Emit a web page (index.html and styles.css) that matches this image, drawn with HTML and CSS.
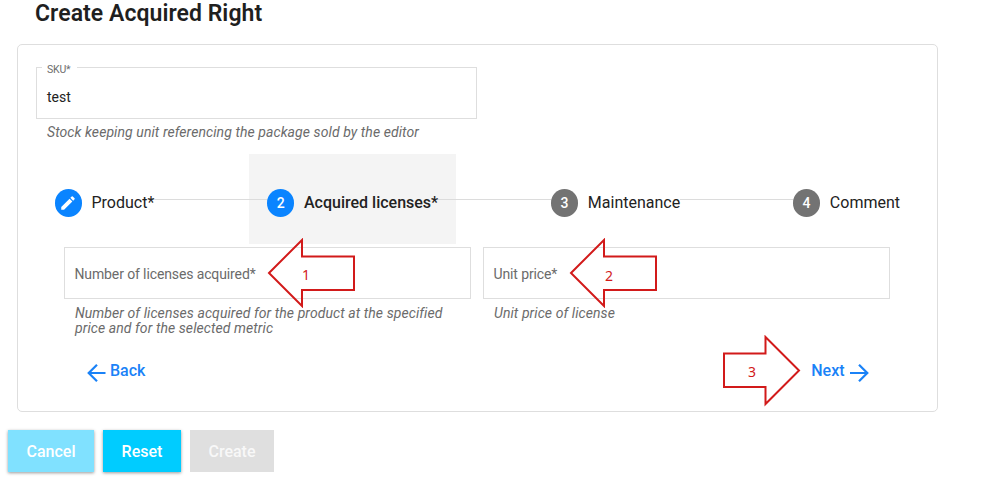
FILE: index.html
```html
<!DOCTYPE html>
<html lang="en">
<head>
<meta charset="utf-8">
<title>Create Acquired Right</title>
<link rel="stylesheet" href="styles.css">
</head>
<body>
<main class="page">
  <h1 class="title">Create Acquired Right</h1>
  <section class="card">
    <div class="field field-sku">
      <span class="float-label">SKU*</span>
      <span class="value">test</span>
    </div>
    <p class="hint hint-sku">Stock keeping unit referencing the package sold by the editor</p>

    <nav class="stepper">
      <div class="step">
        <span class="dot blue"><svg width="18" height="18" viewBox="0 0 24 24"><path fill="#fff" d="M3 17.25V21h3.75L17.81 9.94l-3.75-3.75L3 17.25zM20.71 7.04a1 1 0 0 0 0-1.41l-2.34-2.34a1 1 0 0 0-1.41 0l-1.83 1.83 3.75 3.75 1.83-1.83z"/></svg></span>
        <span class="step-label">Product*</span>
      </div>
      <i class="line"></i>
      <div class="step active">
        <span class="dot blue">2</span>
        <span class="step-label">Acquired licenses*</span>
      </div>
      <i class="line"></i>
      <div class="step">
        <span class="dot">3</span>
        <span class="step-label">Maintenance</span>
      </div>
      <i class="line"></i>
      <div class="step">
        <span class="dot">4</span>
        <span class="step-label">Comment</span>
      </div>
    </nav>

    <div class="columns">
      <div>
        <div class="field"><span class="placeholder">Number of licenses acquired*</span></div>
        <p class="hint">Number of licenses acquired for the product at the specified<br>price and for the selected metric</p>
      </div>
      <div>
        <div class="field"><span class="placeholder">Unit price*</span></div>
        <p class="hint">Unit price of license</p>
      </div>
    </div>

    <div class="moves">
      <a class="move"><svg width="20" height="20" viewBox="0 0 20 20"><path d="M19.5 10H3M11 1.7L2.7 10L11 18.3"/></svg><span>Back</span></a>
      <a class="move"><span>Next</span><svg width="20" height="20" viewBox="0 0 20 20"><path d="M1 10H18M10 1.7L18.3 10L10 18.3"/></svg></a>
    </div>
  </section>
  <div class="actions">
    <button class="btn cancel">Cancel</button>
    <button class="btn reset">Reset</button>
    <button class="btn create" disabled>Create</button>
  </div>

  <div class="callout one"><svg width="90" height="70" viewBox="0 0 90 70"><path d="M2 35L35 2V18.5H87V52H35V68Z"/></svg><span>1</span></div>
  <div class="callout two"><svg width="90" height="70" viewBox="0 0 90 70"><path d="M2 35L35 2V18.5H87V52H35V68Z"/></svg><span>2</span></div>
  <div class="callout three"><svg width="80" height="72" viewBox="0 0 80 72"><path d="M2 18.5H43.5V2L77 35.5L43.5 69V52H2Z"/></svg><span>3</span></div>
</main>
</body>
</html>
```
FILE: styles.css
```css
* { box-sizing: border-box; }
body { margin: 0; background: #fff; font-family: Roboto, "Liberation Sans", sans-serif; color: #222; }
.page { position: relative; width: 985px; height: 483px; overflow: hidden; }
.title { margin: 0 0 0 35px; height: 44px; font-size: 23px; letter-spacing: .05px; line-height: 27px; font-weight: 600; color: #1f1f1f; white-space: nowrap; }
.card { width: 921px; height: 368px; margin-left: 17px; padding: 22px 19px 0 18px; border: 1px solid #dedede; border-radius: 5px; }
.field { position: relative; height: 52px; border: 1px solid #dedede; display: flex; align-items: center; padding: 0 10px; font-size: 14px; white-space: nowrap; }
.field-sku { width: 441px; }
.float-label { position: absolute; left: 5px; top: -6px; padding: 0 7px 0 5px; background: #fff; font-size: 10.5px; letter-spacing: -.2px; line-height: 15px; color: #6d6d6d; }
.value { padding-top: 7px; }
.placeholder { padding-top: 1px; color: #6b6b6b; letter-spacing: -.12px; }
.columns .field { padding-left: 9.5px; }
.hint { margin: 7px 0 0 11px; font-size: 14px; line-height: 15px; letter-spacing: .08px; font-style: italic; color: #6b6b6b; white-space: nowrap; }
.hint-sku { margin-top: 6px; }
.stepper { display: flex; align-items: center; height: 90px; margin: 14px 18px 0 18.5px; }
.step { display: flex; align-items: center; gap: 9.5px; height: 90px; padding-top: 7.5px; }
.active { background: #f4f4f4; margin: 0 -18px; padding-left: 18px; padding-right: 18px; font-weight: 500; }
.dot { width: 27.5px; height: 27.5px; border-radius: 50%; background: #737373; color: #fff; display: flex; align-items: center; justify-content: center; font-size: 14px; font-weight: 500; }
.blue { background: #0a84ff; }
.step-label { font-size: 16px; white-space: nowrap; }
.line { position: relative; flex: 1; height: 1px; background: #dcdcdc; }
.columns { display: grid; grid-template-columns: 407px 407px; gap: 12px; margin: 3px 0 0 28px; }
.moves { display: flex; justify-content: space-between; margin: 25px 49.5px 0 50px; }
.move { display: flex; gap: 4px; color: #1a82f7; font-size: 16px; line-height: 20px; font-weight: 500; }
.move svg { margin-top: 2px; fill: none; stroke: currentColor; stroke-width: 2.2; }
.actions { display: flex; gap: 9px; margin: 18px 0 0 8px; }
.btn { height: 42px; border: 0; padding: 1px 0 0; font: 500 16px/41px Roboto, sans-serif; color: #fff; box-shadow: 0 1px 3px rgba(0,0,0,.4); }
.cancel { width: 86px; background: #80e1ff; }
.reset { width: 78px; background: #00ccff; }
.create { width: 84px; background: #dfdfdf; color: #f8f8f8; box-shadow: none; }
.callout { position: absolute; color: #d21a1a; font: 14px/16px "Noto Sans", sans-serif; }
.callout svg { display: block; fill: none; stroke: #d21a1a; stroke-width: 2; }
.callout span { position: absolute; left: 35px; top: 29px; }
.one { left: 267px; top: 238px; }
.two { left: 569px; top: 238px; }
.two span { left: 36px; top: 30px; }
.three { left: 722px; top: 335px; }
.three span { left: 26px; }
```
